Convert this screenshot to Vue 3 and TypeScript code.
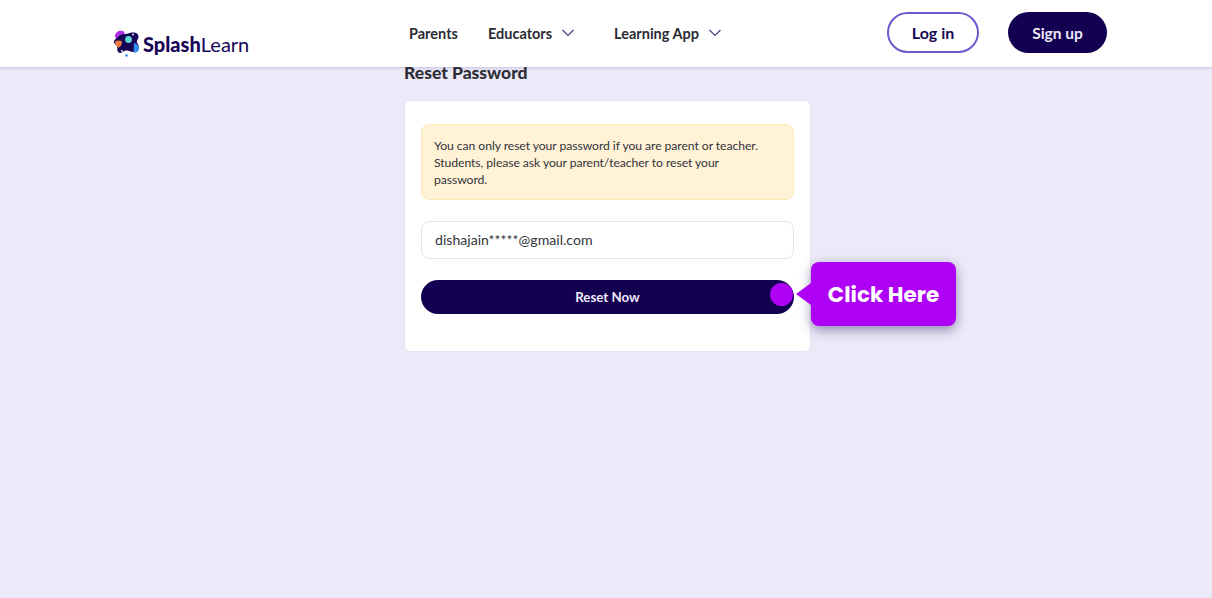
<template>
  <div class="page">
    <header class="site-header">
      <a class="logo" href="#">
        <svg class="logo-mark" width="27" height="27" viewBox="0 0 27 27" aria-hidden="true">
          <path d="M2 5.500C2.500 2 6 .2 9 .8c2 .4 3 1.700 2.500 3.500L6 9C3.500 9 1.800 7.500 2 5.500z" fill="#b02de8" />
          <path d="M6 6c3-2.500 6.500-1.500 9-2.500 3-1.300 8-1.800 9.800.7 1.500 2.200.3 4.500-.7 6.300-1 2 1.200 3.500 1.700 6 .6 3.500-2.500 6-5.500 5.500-3-.4-5-2-7.500-1.500-2.500.6-4.500 3.500-7 2-2.500-1.600-.8-5-2-7C.8 13.500.3 12 1.300 10.500 2.300 9 4 7.700 6 6z" fill="#170555" />
          <path d="M2 11.500c2-1.300 4.800-1.200 6.800-.3.600 2.300-.6 5-3.200 6.500-2-1.200-3.600-3.700-3.600-6.200z" fill="#f27a3d" />
          <circle cx="15.500" cy="9.500" r="3.400" fill="#5fd6d2" />
          <circle cx="20" cy="4.500" r="1" fill="#e9e6fb" />
          <circle cx="9" cy="21" r="1" fill="#e9e6fb" />
          <path d="M21 13c3 .8 5.300 3 5 5.800-.4 3-3 4.400-5.500 3.400z" fill="#2f8df0" />
          <circle cx="13.500" cy="25.500" r="1.300" fill="#2f8df0" />
        </svg>
        <span class="logo-text"><b>Splash</b>Learn</span>
      </a>
      <nav class="nav">
        <a v-for="item in navItems" :key="item.label" class="nav-item" href="#">
          {{ item.label }}
          <svg v-if="item.menu" width="14" height="8" viewBox="0 0 14 8" aria-hidden="true">
            <path d="M1.500 1l5.500 5.500L12.500 1" fill="none" stroke="#4b3f86" stroke-width="1.200" />
          </svg>
        </a>
      </nav>
      <div class="actions">
        <button class="btn-login" type="button">Log in</button>
        <button class="btn-signup" type="button">Sign up</button>
      </div>
    </header>

    <main class="content">
      <h1>Reset Password</h1>
      <section class="card">
        <p class="notice">
          You can only reset your password if you are parent or teacher. Students, please ask your parent/teacher to reset your password.
        </p>
        <input class="email" type="text" value="dishajain*****@gmail.com" />
        <div class="submit-row">
          <button class="btn-reset" type="button">Reset Now</button>
          <span class="dot"></span>
          <div class="tooltip">Click Here</div>
        </div>
      </section>
    </main>
  </div>
</template>

<script setup lang="ts">
interface NavItem {
  label: string
  menu: boolean
}

const navItems: NavItem[] = [
  { label: 'Parents', menu: false },
  { label: 'Educators', menu: true },
  { label: 'Learning App', menu: true }
]
</script>

<style>
html,
body {
  margin: 0;
  background: #ece9f9;
}
</style>

<style scoped>
.page {
  min-height: 598px;
  background: #ece9f9;
  color: #2b2b33;
  font-family: Lato, "Noto Sans", sans-serif;
  overflow: hidden;
}

.site-header {
  position: relative;
  z-index: 1;
  display: flex;
  align-items: center;
  height: 67px;
  padding: 0 105px 0 113px;
  background: #fff;
  box-shadow: 0 1px 3px rgba(60, 50, 120, 0.22);
}

.logo {
  display: flex;
  align-items: center;
  gap: 3px;
  width: 296px;
  margin-top: 21px;
  color: #170555;
  text-decoration: none;
}

.logo-mark {
  flex: none;
  margin-top: -2px;
}

.logo-text {
  font-size: 20px;
  font-weight: 400;
}

.logo-text b {
  font-weight: 900;
}

.nav {
  display: flex;
  gap: 30px;
  margin-top: -1px;
}

.nav-item {
  display: flex;
  align-items: center;
  gap: 9px;
  color: #2b2b33;
  font-size: 14.500px;
  font-weight: 700;
  text-decoration: none;
}

.nav-item svg {
  margin-right: 9px;
}

.actions {
  display: flex;
  gap: 29px;
  margin-left: auto;
  margin-top: -2px;
}

.btn-login,
.btn-signup {
  height: 41px;
  border-radius: 21px;
  font: 700 16px Lato, "Noto Sans", sans-serif;
}

.btn-login {
  width: 92px;
  border: 2px solid #6a5acd;
  background: #fff;
  color: #170555;
}

.btn-signup {
  width: 99px;
  border: 0;
  background: #130050;
  color: #ece9f9;
  font-size: 15.500px;
}

.content {
  width: 407px;
  margin-left: 404px;
}

h1 {
  margin: -5px 0 16px;
  font-size: 17.500px;
  font-weight: 900;
  line-height: 22px;
  color: #2f2f38;
}

.card {
  display: flex;
  flex-direction: column;
  box-sizing: border-box;
  height: 252px;
  padding: 23px 16px;
  border: 1px solid #e6e3f5;
  border-radius: 6px;
  background: #fff;
}

.notice {
  box-sizing: border-box;
  height: 76px;
  margin: 0 0 21px;
  padding: 12px 29px 12px 12px;
  border: 1px solid #fdeab8;
  border-radius: 8px;
  background: #fff2d6;
  font-size: 12.200px;
  letter-spacing: -0.070px;
  line-height: 17px;
  color: #33333b;
}

.email {
  box-sizing: border-box;
  height: 38px;
  margin-bottom: 21px;
  padding: 0 13px 2px;
  border: 1px solid #e4e1f3;
  border-radius: 8px;
  outline: none;
  color: #33333b;
  font: 400 14.100px Lato, "Noto Sans", sans-serif;
}

.submit-row {
  position: relative;
}

.btn-reset {
  display: block;
  width: 100%;
  height: 34px;
  border: 0;
  border-radius: 17px;
  background: #130050;
  color: #ece9f9;
  font: 700 13.300px Lato, "Noto Sans", sans-serif;
}

.dot {
  position: absolute;
  top: 3px;
  right: 1px;
  width: 23px;
  height: 23px;
  border-radius: 50%;
  background: #ae00f5;
}

.tooltip {
  position: absolute;
  top: -18px;
  left: 390px;
  width: 145px;
  height: 64px;
  border-radius: 8px;
  background: #ae00f5;
  box-shadow: 0 4px 12px rgba(40, 20, 90, 0.45);
  color: #fff;
  font: 700 21.500px/65px Poppins, "Open Sans", sans-serif;
  text-align: center;
}

.tooltip::before {
  content: "";
  position: absolute;
  top: 21px;
  left: -15px;
  border-top: 11px solid transparent;
  border-bottom: 11px solid transparent;
  border-right: 15px solid #ae00f5;
}
</style>
